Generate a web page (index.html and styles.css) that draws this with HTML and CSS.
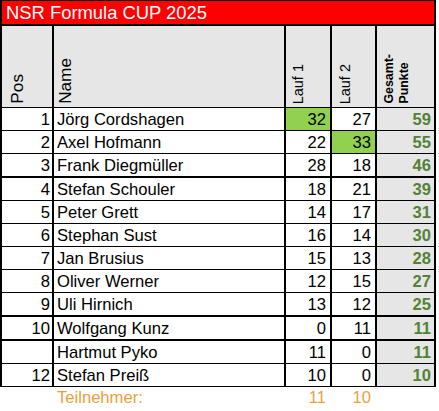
FILE: index.html
```html
<!DOCTYPE html>
<html lang="de">
<head>
<meta charset="utf-8">
<title>NSR Formula CUP 2025</title>
<link rel="stylesheet" href="styles.css">
</head>
<body>
<div class="sheet">
  <div class="title">NSR Formula CUP 2025</div>

  <div class="c h pos"><span class="vt big">Pos</span></div>
  <div class="c h name"><span class="vt big">Name</span></div>
  <div class="c h lauf"><span class="vt">Lauf 1</span></div>
  <div class="c h lauf2"><span class="vt">Lauf 2</span></div>
  <div class="c h tot"><span class="vt small">Gesamt-<br>Punkte</span></div>

  <div class="c pos num">1</div><div class="c name">Jörg Cordshagen</div><div class="c num l1 best">32</div><div class="c num l2">27</div><div class="c num tot pts">59</div>
  <div class="c pos num">2</div><div class="c name">Axel Hofmann</div><div class="c num l1">22</div><div class="c num l2 best">33</div><div class="c num tot pts">55</div>
  <div class="c pos num thick">3</div><div class="c name thick">Frank Diegmüller</div><div class="c num l1 thick">28</div><div class="c num l2 thick">18</div><div class="c num tot pts thick">46</div>
  <div class="c pos num">4</div><div class="c name">Stefan Schouler</div><div class="c num l1">18</div><div class="c num l2">21</div><div class="c num tot pts">39</div>
  <div class="c pos num">5</div><div class="c name">Peter Grett</div><div class="c num l1">14</div><div class="c num l2">17</div><div class="c num tot pts">31</div>
  <div class="c pos num">6</div><div class="c name">Stephan Sust</div><div class="c num l1">16</div><div class="c num l2">14</div><div class="c num tot pts">30</div>
  <div class="c pos num">7</div><div class="c name">Jan Brusius</div><div class="c num l1">15</div><div class="c num l2">13</div><div class="c num tot pts">28</div>
  <div class="c pos num">8</div><div class="c name">Oliver Werner</div><div class="c num l1">12</div><div class="c num l2">15</div><div class="c num tot pts">27</div>
  <div class="c pos num thick">9</div><div class="c name thick">Uli Hirnich</div><div class="c num l1 thick">13</div><div class="c num l2 thick">12</div><div class="c num tot pts thick">25</div>
  <div class="c pos num thick">10</div><div class="c name thick">Wolfgang Kunz</div><div class="c num l1 thick">0</div><div class="c num l2 thick">11</div><div class="c num tot pts thick">11</div>
  <div class="c pos num"></div><div class="c name">Hartmut Pyko</div><div class="c num l1">11</div><div class="c num l2">0</div><div class="c num tot pts">11</div>
  <div class="c pos num">12</div><div class="c name">Stefan Preiß</div><div class="c num l1">10</div><div class="c num l2">0</div><div class="c num tot pts">10</div>

  <div class="f"></div><div class="f fname">Teilnehmer:</div><div class="f fnum">11</div><div class="f fnum">10</div><div class="f"></div>
</div>
</body>
</html>
```
FILE: styles.css
```css
html, body {
  margin: 0;
  padding: 0;
  background: #ffffff;
}

body {
  font-family: "Liberation Sans", Arial, sans-serif;
  color: #000;
}

.sheet {
  display: grid;
  grid-template-columns: 54px 232px 46px 45px 59px;
  width: 436px;
}

.title {
  grid-column: 1 / -1;
  box-sizing: border-box;
  height: 26px;
  background: #ff0000;
  color: #ffffff;
  border-top: 1px solid #000;
  border-left: 2px solid #000;
  border-right: 2px solid #000;
  border-bottom: 2px solid #000;
  font-size: 18.4px;
  line-height: 23px;
  padding-left: 4px;
  white-space: nowrap;
}

.c {
  box-sizing: border-box;
  height: 23px;
  padding-top: 1px;
  border-right: 2px solid #000;
  border-bottom: 1px solid #000;
  font-size: 16.6px;
  line-height: 21px;
  white-space: nowrap;
  overflow: hidden;
}

.c.thick {
  height: 24px;
  border-bottom-width: 2px;
}

.c.pos {
  border-left: 2px solid #000;
}

.num {
  text-align: right;
}

.pos.num { padding-right: 2px; }
.name { padding-left: 3px; }
.l1 { padding-right: 4px; }
.l2 { padding-right: 4px; }
.tot { background: #e6e6e6; }
.tot.num { padding-right: 3px; }

.pts {
  color: #548235;
  font-weight: bold;
}

.best {
  background: #92d050;
}

/* header */
.c.h {
  height: 82px;
  padding-top: 0;
  background: #e6e6e6;
  display: flex;
  align-items: flex-end;
  padding-bottom: 3px;
}

.h.pos { padding-left: 6px; }
.h.name { padding-left: 2px; }
.h.lauf { padding-left: 4px; }
.h.lauf2 { padding-left: 5px; }
.h.tot { padding-left: 5px; }

.vt {
  writing-mode: vertical-rl;
  transform: rotate(180deg);
  font-size: 14.5px;
  line-height: 16px;
}

.vt.big {
  font-size: 17.2px;
  line-height: 18px;
}

.vt.small {
  font-size: 12.4px;
  font-weight: bold;
  line-height: 15px;
}

/* footer */
.f {
  box-sizing: border-box;
  height: 23px;
  font-size: 16.6px;
  line-height: 22px;
  color: #e9a23b;
  white-space: nowrap;
}

.fname { padding-left: 3px; }
.fnum { text-align: right; padding-right: 6px; }
```
